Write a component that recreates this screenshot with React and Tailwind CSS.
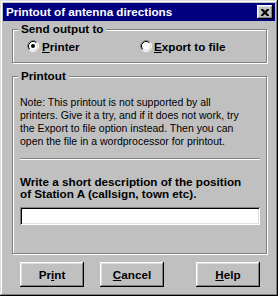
import React from "react";

const raised =
  "shadow-[inset_-1px_-1px_#000,inset_1px_1px_#fff,inset_-2px_-2px_#808080,inset_2px_2px_#dfdfdf]";

function Radio({ checked }) {
  return (
    <svg width="12" height="12" viewBox="0 0 12 12" className="shrink-0">
      <circle cx="6" cy="6" r="4.5" fill="#fff" />
      <path d="M2.11 9.89A5.5 5.5 0 0 1 9.89 2.11" stroke="#808080" fill="none" />
      <path d="M9.89 2.11A5.5 5.5 0 0 1 2.11 9.89" stroke="#fff" fill="none" />
      <path d="M2.82 9.18A4.5 4.5 0 0 1 9.18 2.82" stroke="#000" fill="none" />
      <path d="M9.18 2.82A4.5 4.5 0 0 1 2.82 9.18" stroke="#dfdfdf" fill="none" />
      {checked && <circle cx="6" cy="6" r="2" fill="#000" />}
    </svg>
  );
}

function GroupBox({ label, className = "", children }) {
  return (
    <div
      className={`relative ml-[9px] w-[255px] border border-[#808080] shadow-[inset_1px_1px_#fff,1px_1px_#fff] ${className}`}
    >
      <span className="absolute left-[5px] top-[-8px] bg-[#c0c0c0] px-[3px] text-[11.7px] font-bold leading-[14px] text-black">
        {label}
      </span>
      {children}
    </div>
  );
}

function Button({ children }) {
  return (
    <button
      type="button"
      className={`h-[25px] w-[64px] bg-[#c0c0c0] text-[11.7px] font-bold leading-none text-black ${raised}`}
    >
      {children}
    </button>
  );
}

export default function App() {
  return (
    <div className="flex h-[296px] w-[278px] flex-col bg-[#c0c0c0] p-[3px] font-['Liberation_Sans',Arial,sans-serif] text-black shadow-[inset_-1px_-1px_#000,inset_1px_1px_#dfdfdf,inset_-2px_-2px_#808080,inset_2px_2px_#fff]">
      {/* Title bar */}
      <div className="flex h-[18px] items-center justify-between bg-[#000080] pl-[3px] pr-[2px]">
        <span className="text-[11.7px] font-bold leading-none text-white">
          Printout of antenna directions
        </span>
        <button
          type="button"
          className={`flex h-[14px] w-[16px] items-center justify-center bg-[#c0c0c0] ${raised}`}
        >
          <svg width="8" height="7" viewBox="0 0 8 7">
            <path d="M0 0h2l2 2 2-2h2v1l-2.5 2.5L8 6v1H6L4 5 2 7H0V6l2.5-2.5L0 1z" fill="#000" />
          </svg>
        </button>
      </div>

      {/* Send output to */}
      <GroupBox label="Send output to" className="mt-[8px] h-[34px]">
        <div className="flex h-full items-center pl-[14px] pt-[1px]">
          <label className="flex w-[113px] items-center gap-[3px] text-[11.7px] font-bold">
            <Radio checked />
            <span>
              <u>P</u>rinter
            </span>
          </label>
          <label className="flex items-center gap-[2px] text-[11.7px] font-bold">
            <Radio />
            <span>
              <u>E</u>xport to file
            </span>
          </label>
        </div>
      </GroupBox>

      {/* Printout */}
      <GroupBox label="Printout" className="mt-[13px] h-[178px]">
        <div className="flex flex-col pl-[7px] pr-[6px] pt-[19px]">
          <p className="text-[10.5px] leading-[13px]">
            Note: This printout is not supported by all
            <br />
            printers. Give it a try, and if it does not work, try
            <br />
            the Export to file option instead. Then you can
            <br />
            open the file in a wordprocessor for printout.
          </p>
          <div className="mt-[10px] h-[2px] w-[240px] border-t border-b border-t-[#808080] border-b-white" />
          <p className="mt-[16px] text-[11.7px] font-bold leading-[12px]">
            Write a short description of the position
            <br />
            of Station A (callsign, town etc).
          </p>
          <input
            type="text"
            className="mt-[7px] h-[18px] w-[240px] bg-white px-[3px] text-[11px] outline-none shadow-[inset_1px_1px_#808080,inset_-1px_-1px_#fff,inset_2px_2px_#000,inset_-2px_-2px_#dfdfdf]"
          />
        </div>
      </GroupBox>

      {/* Buttons */}
      <div className="ml-[17px] mt-[8px] flex">
        <Button>
          Pr<u>i</u>nt
        </Button>
        <div className="ml-[16px]">
          <Button>
            <u>C</u>ancel
          </Button>
        </div>
        <div className="ml-[32px]">
          <Button>
            <u>H</u>elp
          </Button>
        </div>
      </div>
    </div>
  );
}
